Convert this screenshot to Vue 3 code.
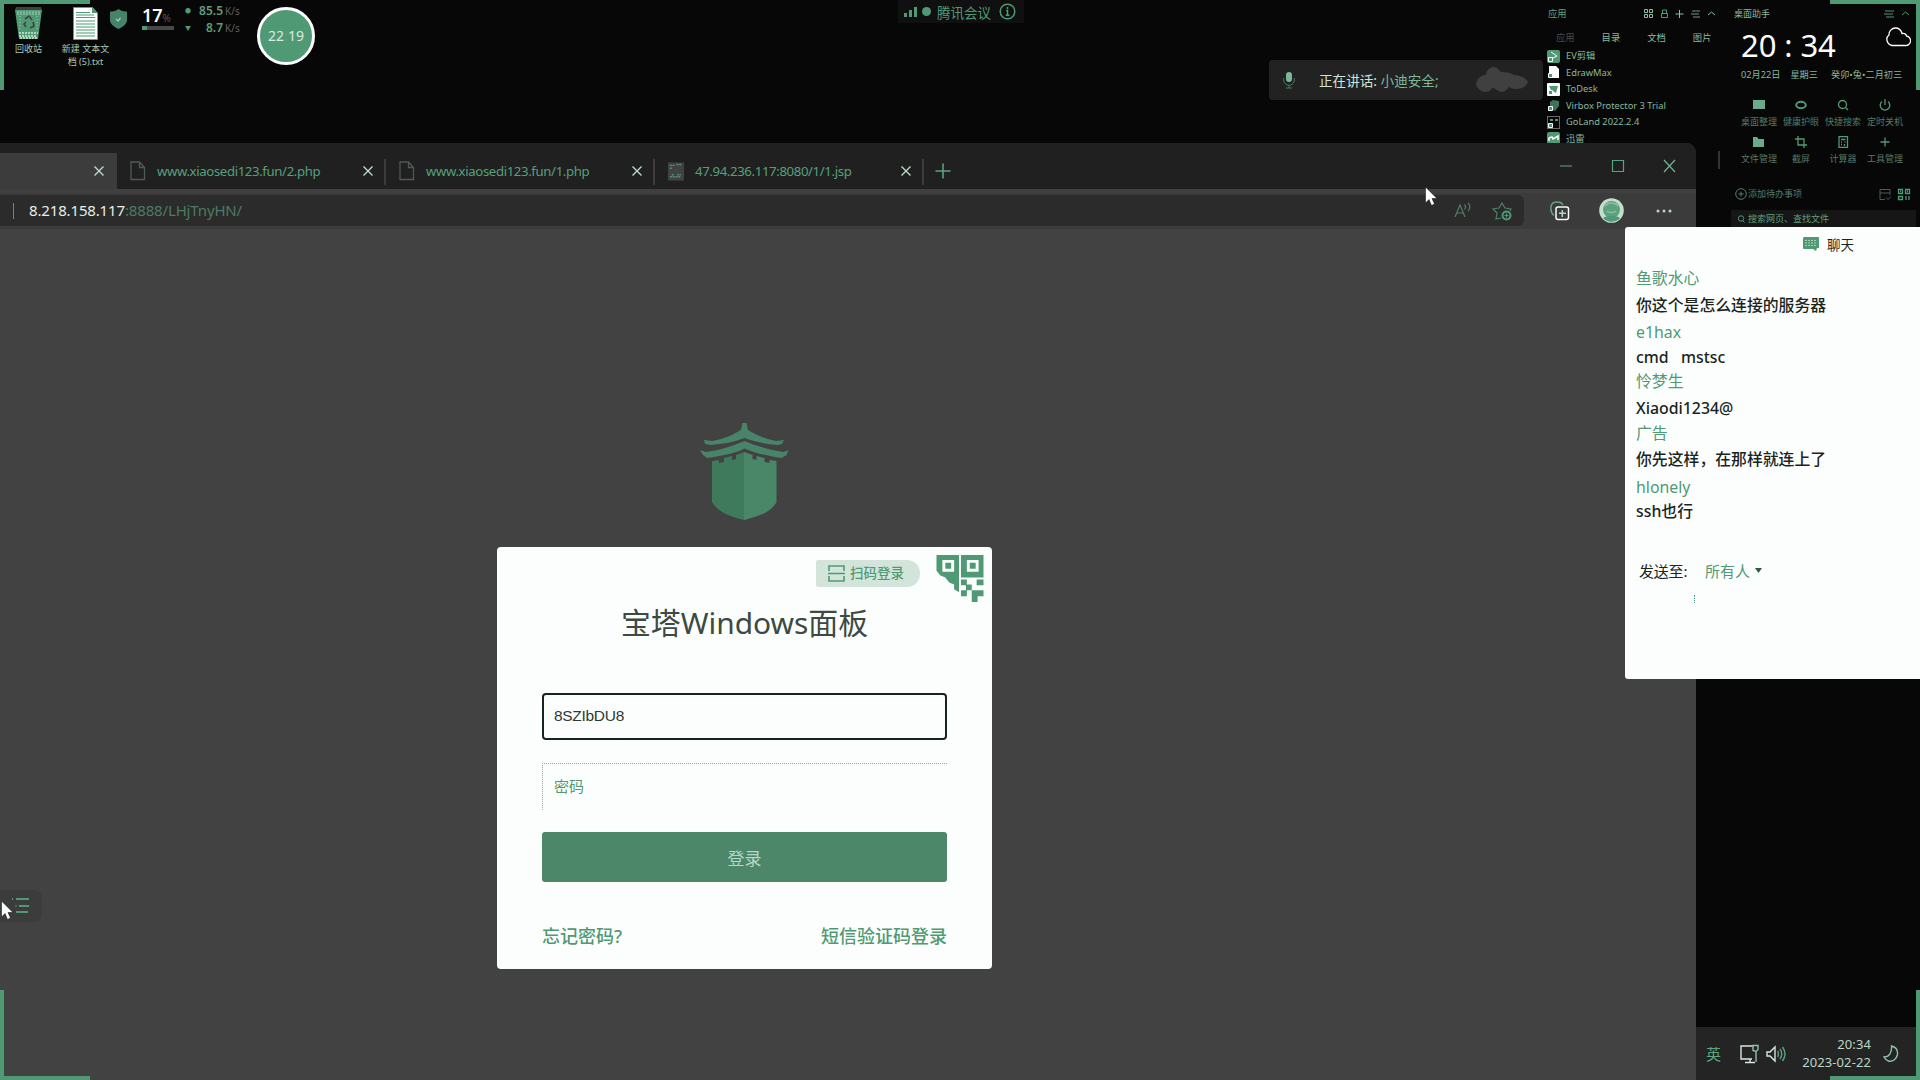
<script setup>
const tabs = [
  { title: 'www.xiaosedi123.fun/2.php', kind: 'file', width: 269 },
  { title: 'www.xiaosedi123.fun/1.php', kind: 'file', width: 269 },
  { title: '47.94.236.117:8080/1/1.jsp', kind: 'site', width: 269 },
]
const apps = [
  { name: 'EV剪辑', kind: 'play' },
  { name: 'EdrawMax', kind: 'doc' },
  { name: 'ToDesk', kind: 'send' },
  { name: 'Virbox Protector 3 Trial', kind: 'shield' },
  { name: 'GoLand 2022.2.4', kind: 'go' },
  { name: '迅雷', kind: 'bird' },
]
const tools = [
  { name: '桌面整理', icon: 'desk' },
  { name: '健康护眼', icon: 'eye' },
  { name: '快捷搜索', icon: 'search' },
  { name: '定时关机', icon: 'power' },
  { name: '文件管理', icon: 'folder' },
  { name: '截屏', icon: 'crop' },
  { name: '计算器', icon: 'calc' },
  { name: '工具管理', icon: 'plus' },
]
const messages = [
  { user: '鱼歌水心', text: '你这个是怎么连接的服务器', h: [27, 27] },
  { user: 'e1hax', text: 'cmd   mstsc', h: [28, 22] },
  { user: '怜梦生', text: 'Xiaodi1234@', h: [26, 28] },
  { user: '广告', text: '你先这样，在那样就连上了', h: [22, 30] },
  { user: 'hlonely', text: 'ssh也行', h: [26, 22] },
]
</script>

<template>
  <div class="desktop">
    <i class="corner tl"></i><i class="corner tr"></i>

    <div class="shortcuts">
      <div class="shortcut bin">
        <svg width="27" height="33" viewBox="0 0 27 33">
          <path d="M0 3h27l-4 29H4z" fill="#4f9a74" />
          <path d="M1 0h25l1 3H0z" fill="#424242" />
          <path d="M2 5h23M2 7h23" stroke="#a6ccb7" stroke-width="1" stroke-dasharray="2 1" />
          <path d="M4 26h19M4 29h18M5 31h17" stroke="#d5e6dc" stroke-width="1.4" stroke-dasharray="2 1" />
          <path d="M10 12l4-3 3 4M18 15l1 4-4 2M11 20l-2-3 2-2" stroke="#424242" stroke-width="1.6" fill="none" />
          <path d="M5 9v14M22 9v14" stroke="#a6ccb7" stroke-dasharray="1 2" />
        </svg>
        <span>回收站</span>
      </div>
      <div class="shortcut txt">
        <svg width="25" height="33" viewBox="0 0 25 33">
          <path d="M.5.5h19l5 6v26H.5z" fill="#fcfefd" stroke="#8a8a8a" />
          <path d="M19 0v6h6" fill="#4f9a74" />
          <path d="M3 5.500h14M3 8h18M3 10.500h19M3 14h19M3 17h19M3 20h19M3 23h19M3 26h19M3 29h19" stroke="#4f9a74" stroke-width="1.100" />
        </svg>
        <span>新建 文本文<br />档 (5).txt</span>
      </div>
    </div>

    <div class="monitor">
      <svg class="guard" width="17" height="20" viewBox="0 0 17 20">
        <path d="M8.500 0C11 2 14 2.500 17 2.500V11c0 4-4 7-8.500 9C4 18 0 15 0 11V2.500C3 2.500 6 2 8.500 0z" fill="#47826a" />
        <path d="M6 10l2 2L10.500 9" stroke="#a9cdb9" stroke-width="1.200" fill="none" />
      </svg>
      <div class="mem">
        <div><b>17</b><small>%</small></div>
        <div class="bar"><i></i></div>
      </div>
      <div class="net">
        <p><em>●</em><b>85.5</b><small>K/s</small></p>
        <p><em>▼</em><b>8.7</b><small>K/s</small></p>
      </div>
    </div>
    <div class="timer">22<u>:</u>19</div>

    <div class="meeting">
      <svg width="14" height="10" viewBox="0 0 14 10"><path d="M0 6h3v4H0zM5 3h3v7H5zM10 0h3v10h-3z" fill="#4f9a74" /></svg>
      <i></i>
      <span>腾讯会议</span>
      <svg width="17" height="17" viewBox="0 0 17 17" fill="none" stroke="#4f9a74"><circle cx="8.500" cy="8.500" r="7.300" stroke-width="1.500" /><path d="M8.500 4v2M7 7.500h1.500V12M6.800 12.300h3.600" stroke-width="1.500" /></svg>
    </div>

    <div class="speaking">
      <svg width="12" height="17" viewBox="0 0 12 17"><rect x="3" y="0" width="6" height="10" rx="3" fill="#7db698" /><path d="M.7 6v2a5.200 5.200 0 0 0 10.600 0V6M6 13v3M3 16h6" stroke="#427a5d" fill="none" /></svg>
      <span>正在讲话: <em>小迪安全;</em></span>
      <svg class="blob" width="52" height="26" viewBox="0 0 52 26"><path d="M0 17C2 10 6 8 10 8c0-4 3-7 7-8 4 0 6 3 8 5 6 0 10 1 13 3 6 0 12 3 14 7-2 5-7 7-12 7-3 0-5-1-7-2-2 3-5 5-8 5-3-1-5-4-9-4-2 3-4 4-7 4-5-1-9-4-9-9z" fill="#404040" /></svg>
    </div>

    <section class="apps">
      <header>
        <span>应用</span>
        <svg width="72" height="10" viewBox="0 0 72 10" fill="none" stroke="#8fbfa5">
          <path d="M.5.5h3v3h-3zM5.500.5h3v3h-3zM.5 5.500h3v3h-3zM5.500 5.500h3v3h-3z" />
          <path d="M17.500 4.500h6v4h-6zM18.500 4.500V1h4v3.500" stroke="#4f9a74" />
          <path d="M36 1v8M32 5h8" transform="translate(-.5 0)" />
          <path d="M48 2h8M47 5h8M49 8h7" stroke="#6a9c81" />
          <path d="M64 6l3.500-3L71 6" />
        </svg>
      </header>
      <nav><span class="dim">应用</span><span>目录</span><span>文档</span><span>图片</span></nav>
      <ul>
        <li v-for="a in apps" :key="a.name">
          <svg width="13" height="13" viewBox="0 0 13 13">
            <template v-if="a.kind === 'doc'"><path d="M2 0h7l3 3v9H2z" fill="#fcfefd" /></template>
            <template v-else-if="a.kind === 'send'"><rect width="13" height="13" rx="1" fill="#fcfefd" /><path d="M2 3h9l-2 7-3-2-2-1z" fill="#4f9a74" /></template>
            <template v-else-if="a.kind === 'shield'"><path d="M6 1l6 1v5l-4 5-5-3V3z" fill="#3f7358" /></template>
            <template v-else-if="a.kind === 'go'"><rect x=".5" y=".5" width="12" height="12" fill="#070707" stroke="#686868" /><path d="M3 4h3M8 4h3" stroke="#4f9a74" stroke-width="2" /></template>
            <template v-else><rect width="13" height="13" rx="2" fill="#4f9a74" /></template>
            <path v-if="a.kind === 'play'" d="M4 2l6 4-6 3" fill="none" stroke="#fcfefd" />
            <path v-if="a.kind === 'bird'" d="M2 9V6l3-1 1 2 5-3v4" fill="none" stroke="#fcfefd" stroke-width="1.500" />
            <path v-else d="M1.500 7.500h4v4h-4z" fill="#4f9a74" stroke="#fcfefd" />
          </svg>
          <span>{{ a.name }}</span>
        </li>
      </ul>
    </section>

    <section class="helper">
      <header>
        <span>桌面助手</span>
        <svg width="26" height="10" viewBox="0 0 26 10" fill="none" stroke="#4f9a74"><path d="M1 2h9M0 5h9M2 8h8M18 6l3.500-3L25 6" /></svg>
      </header>
      <div class="clock">
        <b>20 : 34</b>
        <svg width="25" height="20" viewBox="0 0 25 20"><path d="M6 18.500h13a4.800 4.800 0 0 0 1.500-9.500c-.3-2-2-3-4.500-2.500C15 3 12.500 1 9.500 1A6.500 6.500 0 0 0 3 8c-4 3-2 9.500 3 10.500z" fill="none" stroke="#fcfefd" stroke-width="1.300" /></svg>
      </div>
      <div class="date"><span>02月22日</span><span>星期三</span><span>癸卯•兔•二月初三</span></div>
      <div class="tools">
        <div v-for="t in tools" :key="t.name">
          <svg width="12" height="12" viewBox="0 0 12 12" fill="none" stroke="#4f9a74" stroke-width="1.300">
            <path v-if="t.icon === 'desk'" d="M0 1h12v9H0z" fill="#6bab89" stroke="none" />
            <template v-else-if="t.icon === 'eye'"><ellipse cx="6" cy="6" rx="4.800" ry="3.200" stroke-width="2" /></template>
            <template v-else-if="t.icon === 'search'"><circle cx="5.500" cy="5.500" r="4" /><path d="M8.500 8.500L11 11" /></template>
            <path v-else-if="t.icon === 'power'" d="M3 2.500a4.800 4.800 0 1 0 6 0M6 0v6" />
            <path v-else-if="t.icon === 'folder'" d="M0 1h4l1.500 2H11v8H0z" fill="#6bab89" stroke="none" />
            <path v-else-if="t.icon === 'crop'" d="M3 0v9h9M0 3h9v9" />
            <path v-else-if="t.icon === 'calc'" d="M2 .7h8.500v10.600H2zM4 3.500h4.500M4 6h1M7.500 6h1M4 8.500h1M7.500 8v2" />
            <path v-else d="M6 1.500v9M1.500 6h9" />
          </svg>
          <span>{{ t.name }}</span>
        </div>
      </div>
      <div class="todo">
        <svg width="12" height="12" viewBox="0 0 12 12" fill="none" stroke="#58806a"><circle cx="6" cy="6" r="5.300" /><path d="M6 3.500v5M3.500 6h5" /></svg>
        <span>添加待办事项</span>
        <svg width="32" height="13" viewBox="0 0 32 13" fill="none" stroke="#4a5f54"><path d="M6 11.500H1v-10h10V7M1 5h10M7 9.500l2 2 3-3" /><path d="M19.500 1.500h4v4h-4zM26.500 1.500h4v4h-4zM19.500 8.500h4v3h-4zM27 8v4M30 8v4M21 3.500h1M28 3.500h1" stroke="#4f9a74" stroke-width="1.300" /></svg>
      </div>
      <div class="find">
        <svg width="8" height="8" viewBox="0 0 8 8" fill="none" stroke="#4f9a74"><circle cx="4" cy="3.500" r="2.700" /><path d="M5.500 5.500l2 2" /></svg>
        <span>搜索网页、查找文件</span>
      </div>
    </section>
    <i class="rail"></i>

    <main class="browser">
      <div class="tabbar">
        <div class="tab active"><svg class="x" viewBox="0 0 10 10"><path d="M.5.5l9 9M9.500.5l-9 9" /></svg></div>
        <div v-for="t in tabs" :key="t.title" class="tab" :class="t.kind" :style="{ width: t.width + 'px' }">
          <svg v-if="t.kind === 'file'" width="16" height="20" viewBox="0 0 16 20" fill="none" stroke="#4e5a54" stroke-width="1.300"><path d="M1 1h8.500l5 5.500V18.500H1zM9.500 1v5.500h5" /></svg>
          <svg v-else width="16" height="19" viewBox="0 0 17 19"><path d="M0 0h17v19H0z" fill="#424242" /><path d="M2 3h5M9 2h6M2 6h3M2 15h12M4 13h2M10 13h4" stroke="#4f9a74" stroke-width="1.500" stroke-dasharray="2 1" /></svg>
          <span>{{ t.title }}</span>
          <svg class="x" viewBox="0 0 10 10"><path d="M.5.5l9 9M9.500.5l-9 9" /></svg>
        </div>
        <svg class="add" width="16" height="16" viewBox="0 0 16 16"><path d="M8 .5v15M.5 8h15" stroke="#5aa17d" stroke-width="1.600" /></svg>
        <svg class="controls" width="116" height="14" viewBox="0 0 116 14" fill="none" stroke="#5aa17d" stroke-width="1.200"><path d="M0 7h12" stroke="#6a9c81" /><path d="M52.500 1.500h11v11h-11z" /><path d="M104 1l11 12M115 1l-11 12" stroke="#74b391" /></svg>
      </div>
      <div class="toolbar">
        <div class="address">
          <i></i>
          <p><b>8.218.158.117</b>:8888/LHjTnyHN/</p>
          <svg width="60" height="20" viewBox="0 0 60 20" fill="none" stroke="#4f7f66" stroke-width="1.200">
            <path d="M1 16L6 4l5 12M3 12h6M10.500 3.500c1.500 1.500 1.500 3 0 5M14 2c2.500 2 2.500 5 0 8" />
            <path d="M47 17l-5 1 1-6-4-4 6-1 3-5 3 5 6 1-1 2" />
            <circle cx="52.500" cy="14.500" r="4" fill="#2d2d2d" stroke="#4f9a74" stroke-width="2" /><path d="M50.500 14.500h4M52.500 12.500v4" stroke="#4f9a74" />
          </svg>
        </div>
        <svg width="20" height="20" viewBox="0 0 20 20" fill="none" stroke="#b8d6c5" stroke-width="1.500"><path d="M4 14.500C1 12 .5 9 1 5.500 1.500 2 4 1 7 1c3 0 5 .5 6 3" stroke="#5fa480" /><rect x="6" y="6" width="12.500" height="12.500" rx="2" stroke="#fcfefd" /><path d="M12.300 9v7M9 12.300h7" /></svg>
        <svg class="avatar" width="25" height="25" viewBox="0 0 25 25"><circle cx="12.500" cy="12.500" r="12.300" fill="#c4ddcf" /><circle cx="12.500" cy="11.500" r="8.500" fill="#5ea17f" /><path d="M6 8c3-4 10-4 13 0M8 13c2 2 7 2 9 0" stroke="#8dbda3" stroke-width="1.500" fill="none" /><path d="M4 20c4-3 13-3 17 0-4 5-13 5-17 0z" fill="#4f9a74" /></svg>
        <svg width="16" height="4" viewBox="0 0 16 4" fill="#b8d6c5"><circle cx="2" cy="2" r="1.500" /><circle cx="8" cy="2" r="1.500" /><circle cx="14" cy="2" r="1.500" /></svg>
      </div>

      <div class="page">
        <svg class="logo" width="89" height="97" viewBox="0 0 89 97">
          <defs><linearGradient id="body"><stop offset=".5" stop-color="#3f7a5c" /><stop offset=".5" stop-color="#4a8769" /></linearGradient></defs>
          <path d="M42.500 0h4l1.500 7c8 5 18 9 28 11l8-1-2 4-4 1c-12-1-23-3-33.500-7C34 19 23 21 11 22l-6-1-1-4 8 1c11-2 21-6 29-11z" fill="#47846a" />
          <path d="M44.500 18c12 5 25 9 39 11l5-2-2 5-5 3c-14-2-27-5-37-9.500C34 31 20 33 7 35l-4-3-3-5 6 2c14-2 27-6 38.500-11z" fill="#47846a" />
          <path d="M44.500 29l8 3v4l4 1v-4l8 2v4l5 1v-3l7 1v41c-5 10-19 15-32 18C31 94 18 89 12 79V38l7-1v3l5-1v-4l8-2v4l4-1v-4z" fill="url(#body)" />
        </svg>
        <form class="card" @submit.prevent>
          <div class="scan">
            <div class="pill">
              <svg width="17" height="17" viewBox="0 0 17 17" fill="none" stroke="#4f9a74" stroke-width="1.600"><path d="M1 6V1h15v5M1 11v5h15v-5M0 8.500h17" /></svg>
              <span>扫码登录</span>
            </div>
            <svg width="48" height="47" viewBox="0 0 48 48" fill="#4f9a74">
              <path d="M0 0h23v38l-5-3v-5l-5-2-4-5-5-2-4-5zM6 5v12h12V5zM25 0h23v23H25zM31 5v12h12V5z" fill-rule="evenodd" />
              <path d="M9 8h6v6H9zM34 8h6v6h-6zM25 25h6v5h5v6h-5v6h-6v-6h5v-5h-5zM41 25h7v6h-7v-3zM36 36h12v6h-6v6h-6z" />
            </svg>
          </div>
          <h1>宝塔Windows面板</h1>
          <div class="field focus">8SZIbDU8</div>
          <div class="field empty">密码</div>
          <button>登录</button>
          <div class="links"><a>忘记密码?</a><a>短信验证码登录</a></div>
        </form>
      </div>
    </main>

    <aside class="chat">
      <header>
        <svg width="16" height="14" viewBox="0 0 16 14"><path d="M1 0h14a1 1 0 0 1 1 1v10h-2l-1 3-3-2H1a1 1 0 0 1-1-1V1z" fill="#4f9a74" /><path d="M2 3.500h12M2 6h12M2 8.500h12" stroke="#a9cdb9" stroke-dasharray="2 1" /></svg>
        <span>聊天</span>
      </header>
      <dl>
        <template v-for="m in messages" :key="m.user">
          <dt :style="{ height: m.h[0] + 'px' }">{{ m.user }}</dt>
          <dd :style="{ height: m.h[1] + 'px' }">{{ m.text }}</dd>
        </template>
      </dl>
      <div class="to"><span>发送至:</span><em>所有人</em><svg width="7" height="5" viewBox="0 0 7 5"><path d="M0 0h7L3.500 5z" fill="#2f5a44" /></svg></div>
      <i></i>
    </aside>

    <footer class="taskbar">
      <span class="ime">英</span>
      <svg width="46" height="20" viewBox="0 0 46 20" fill="none" stroke="#d5e7dc" stroke-width="1.400">
        <path d="M13 2H1v13h11M5 18.500h10M10 15v3" /><path d="M13 1.500h5v4l-2 2-3-1zM16 7v11" stroke="#8fbfa5" />
        <path d="M27 8h3l5-5v14l-5-5h-3z" /><path d="M37.500 7q2 3 0 6M40 5q3.500 5 0 10M42.500 3q5 7 0 14" stroke="#5aa17d" />
      </svg>
      <p>20:34<br />2023-02-22</p>
      <svg width="16" height="18" viewBox="0 0 16 18"><path d="M8.500 1c4 1 6.500 4 6 8.500-1 5-5 7.500-9 6.500-2-.5-3.500-2-4.500-4 5 0 8-4 7.500-11z" fill="none" stroke="#8fbfa5" stroke-width="1.400" /></svg>
    </footer>

    <div class="sideicon"><svg width="18" height="17" viewBox="0 0 18 17" stroke="#4f9a74" stroke-width="2"><path d="M0 2h1M4 2h13M3.500 9h1M7 9h10M4 15h12" /></svg></div>
    <svg class="pointer p1" width="13" height="19" viewBox="0 0 13 19"><path d="M.5 0v16l3.500-3.500L6.500 18.500l3-1.500-2.500-5.500h5z" fill="#fcfefd" stroke="#070707" stroke-width=".5" /></svg>
    <svg class="pointer p2" width="13" height="19" viewBox="0 0 13 19"><path d="M.5 0v16l3.500-3.500L6.500 18.500l3-1.500-2.500-5.500h5z" fill="#fcfefd" stroke="#070707" stroke-width=".5" /></svg>
    <i class="corner bl"></i><i class="corner br"></i>
  </div>
</template>

<style>
body { margin: 0; background: #070707; }
</style>

<style scoped>
* { box-sizing: border-box; }
svg { display: block; flex: none; }
p, h1, dl, dd, ul { margin: 0; padding: 0; }
i, em, b { font-style: normal; font-weight: 400; }
.desktop {
  position: relative; width: 1920px; height: 1080px; overflow: hidden;
  background: #070707; color: #4f9a74;
  font-family: "Noto Sans", "Noto Sans CJK SC", sans-serif;
}
.corner { position: absolute; width: 90px; height: 90px; border: 0 solid #4f9a74; z-index: 9; pointer-events: none; }
.tl { left: 0; top: 0; border-width: 4px 0 0 4px; }
.tr { right: 0; top: 0; border-width: 4px 4px 0 0; }
.bl { left: 0; bottom: 0; border-width: 0 0 4px 4px; }
.br { right: 0; bottom: 0; border-width: 0 4px 4px 0; }

.shortcuts { position: absolute; left: 0; top: 7px; display: flex; }
.shortcut { display: flex; flex-direction: column; align-items: center; gap: 3px; font-size: 9px; line-height: 12.500px; text-align: center; color: #a9c9b7; white-space: nowrap; }
.bin { width: 57px; }
.txt { width: 57px; }

.monitor { position: absolute; left: 110px; top: 4px; display: flex; height: 32px; }
.guard { margin-top: 5px; }
.mem { width: 32px; margin-left: 15px; }
.mem div:first-child { height: 22px; display: flex; align-items: baseline; line-height: 22px; }
.mem b { font-size: 18px; font-weight: 600; color: #fcfefd; }
.mem small { font-size: 10px; color: #585858; }
.mem .bar { height: 4px; background: #484848; }
.bar i { display: block; width: 5px; height: 4px; background: #4f9a74; }
.net { width: 57px; margin-left: 11px; margin-top: -1px; }
.net p { display: flex; align-items: center; justify-content: flex-end; height: 16.500px; line-height: 16px; font-size: 12px; }
.net b { font-weight: 600; color: #5f9f7e; }
.net em { font-size: 6px; margin-right: auto; }
.net small { width: 19px; padding-left: 2px; font-size: 10px; color: #606060; }
.timer { position: absolute; left: 257px; top: 7px; width: 58px; height: 58px; border: 3px solid #fcfefd; border-radius: 50%; background: #4f9a74; color: #d9eae0; font-size: 14px; line-height: 52px; text-align: center; }
.timer u { text-decoration: none; color: #5ba17d; }

.meeting { position: absolute; left: 898px; top: 0; width: 126px; height: 23px; padding-left: 6px; display: flex; align-items: center; background: #101010; font-size: 13.500px; }
.meeting i { width: 9px; height: 9px; margin: 0 6px 0 4px; border-radius: 50%; background: #4f9a74; }
.meeting svg:last-child { margin-left: 8px; }

.speaking { position: absolute; left: 1269px; top: 60px; width: 274px; height: 40px; padding-left: 14px; display: flex; align-items: center; border-radius: 4px; background: #222; font-size: 13.600px; color: #cfe2d7; white-space: nowrap; }
.speaking span { width: 157px; margin-left: 24px; }
.speaking em { color: #7db698; }

.apps { position: absolute; left: 1547px; top: 0; width: 172px; height: 146px; overflow: hidden; font-size: 9.300px; line-height: 16px; color: #8ab89e; }
.apps header { display: flex; justify-content: space-between; align-items: center; height: 27px; padding: 0 3px 0 1px; color: #5f9f7e; }
.apps nav { display: flex; gap: 27px; height: 21px; padding-left: 9px; align-items: center; }
.dim { color: #4a4a4a; }
.apps ul { list-style: none; }
.apps li { display: flex; align-items: center; gap: 6px; height: 16.500px; white-space: nowrap; }

.helper { position: absolute; left: 1731px; top: 0; width: 185px; font-size: 9px; line-height: 12px; color: #5f9f7e; }
.helper header { display: flex; justify-content: space-between; align-items: center; height: 27px; padding: 0 6px 0 3px; color: #8ab89e; }
.clock { display: flex; justify-content: space-between; height: 39px; padding: 0 5px 0 10px; color: #fcfefd; }
.clock b { font-size: 31px; line-height: 37px; letter-spacing: -.1px; white-space: nowrap; }
.date { display: flex; height: 18px; align-items: center; padding-left: 10px; font-size: 9.200px; color: #86b79c; white-space: nowrap; }
.date span:nth-child(2) { margin: 0 13px 0 10px; }
.tools { display: grid; grid-template-columns: repeat(4, 42px); grid-auto-rows: 37px; padding: 15px 0 0 7px; color: #557a66; }
.tools div { display: flex; flex-direction: column; align-items: center; gap: 5px; white-space: nowrap; }
.todo { display: flex; align-items: center; height: 36px; padding: 0 5px 0 4px; margin-top: 3px; color: #557a66; }
.todo span { flex: 1; padding-left: 1px; }
.find { display: flex; align-items: center; gap: 3px; height: 18px; margin-top: -2px; padding-left: 6px; background: #161616; }
.rail { position: absolute; left: 1718px; top: 151px; width: 2px; height: 18px; background: #333; }

.browser { position: absolute; left: 0; top: 143px; width: 1696px; height: 937px; display: flex; flex-direction: column; border-radius: 0 10px 0 0; overflow: hidden; background: #424242; }
.tabbar { display: flex; height: 46px; background: #202020; }
.tab { display: flex; align-items: center; height: 36px; margin-top: 10px; padding: 0 11px 0 13px; font-size: 13.200px; letter-spacing: -.37px; color: #55a07b; border: 0 solid; border-right-width: 2px; border-image: linear-gradient(transparent 7px, #3c3c3c 7px 31px, transparent 31px) 1; white-space: nowrap; }
.tab span { flex: 1; padding-left: 11px; }
.active { width: 117px; padding-right: 12px; background: #3c3c3c; border: 0; }
.x { width: 10px; height: 10px; fill: none; stroke: #b8dcc8; stroke-width: 1.400; }
.active .x { margin-left: auto; margin-right: 1px; }
.add { margin: 20px 0 0 11px; }
.controls { margin: 16px 20px 0 auto; }
.toolbar { display: flex; align-items: center; height: 40px; padding-bottom: 1px; background: #3b3b3b; border-top: 4px solid #404040; }
.address { display: flex; align-items: center; width: 1524px; height: 31px; padding: 0 10px 0 13px; border-radius: 0 6px 6px 0; background: #2b2b2b; }
.address i { width: 1px; height: 16px; background: #4f9a74; }
.address p { flex: 1; padding-left: 15px; font-size: 15px; line-height: 20px; margin-top: -2px; letter-spacing: -.15px; color: #4b7c63; }
.address b { color: #e3f0e8; }
.toolbar > svg { margin-left: 26px; }
.toolbar > svg.avatar { margin-left: 29px; }
.toolbar > svg:last-child { margin-left: 32px; }

.page { flex: 1; display: flex; flex-direction: column; align-items: center; padding: 194px 207px 0 0; }
.logo { margin-bottom: 27px; }
.card { width: 495px; height: 422px; padding: 8px 45px 0; border-radius: 4px; background: #fcfefd; }
.scan { display: flex; justify-content: flex-end; align-items: flex-start; gap: 16px; height: 48px; margin-right: -37px; }
.pill { display: flex; align-items: center; gap: 5px; width: 104px; height: 27px; margin-top: 5px; padding-left: 12px; border-radius: 2px 13px 13px 2px; background: #d3e5db; font-size: 13.500px; line-height: 20px; font-weight: 500; white-space: nowrap; }
.pill span { margin-top: -2px; }
h1 { height: 42px; font-size: 29.900px; line-height: 40px; font-weight: 400; color: #3c4a43; text-align: center; white-space: nowrap; }
.field { width: 405px; height: 47px; padding-left: 12px; display: flex; align-items: center; }
.focus { margin-top: 48px; border: 2px solid #16241c; border-radius: 4px; padding: 0 0 1px 10px; font-family: "Liberation Sans", sans-serif; font-size: 15.500px; letter-spacing: -.3px; color: #2c3a33; }
.empty { margin-top: 23px; border-top: 1px dotted #7db698; border-left: 1px dotted #7db698; font-size: 15px; padding: 0 0 4px 11px; }
button { display: block; width: 405px; height: 50px; margin: 22px 0 0; padding: 0; border: 0; border-radius: 3px; background: #4c8769; color: #b7d6c5; font: 17px "Noto Sans CJK SC", sans-serif; }
.links { display: flex; justify-content: space-between; margin-top: 41px; font-size: 18px; line-height: 26px; font-weight: 500; }

.chat { position: absolute; left: 1625px; top: 227px; width: 295px; height: 452px; border-radius: 3px 0 0 3px; background: #fcfefd; color: #18251e; z-index: 2; }
.chat header { display: flex; align-items: center; gap: 8px; height: 34px; padding-left: 178px; font-size: 13.500px; }
.chat dl { margin-top: 3px; padding-left: 11px; font-size: 15.850px; line-height: 22px; white-space: pre; }
.chat dt, .chat dd { display: flex; align-items: center; }
.chat dt { color: #4f9a74; }
.chat dd { font-weight: 500; }
.to { display: flex; align-items: center; height: 24px; margin: 36px 0 0 14px; font-size: 15px; }
.to span { width: 66px; letter-spacing: -.2px; }
.to em { margin-right: 5px; color: #4f9a74; }
.chat > i { display: block; width: 1px; height: 8px; margin: 13px 0 0 69px; border-left: 1px dotted #4f9a74; }

.taskbar { position: absolute; left: 1696px; top: 1027px; width: 224px; height: 53px; display: flex; align-items: center; padding-left: 10px; background: #242424; color: #b9d6c6; }
.ime { width: 34px; font-size: 15px; color: #5fa480; }
.taskbar p { width: 85px; margin-top: -2px; text-align: right; font-size: 13px; line-height: 18px; letter-spacing: .1px; }
.taskbar svg:last-child { margin-left: 12px; }

.sideicon { position: absolute; left: 0; top: 890px; width: 42px; height: 32px; padding: 7px 0 0 12px; border-radius: 0 8px 8px 0; background: #3c3c3c; }
.pointer { position: absolute; z-index: 3; }
.p1 { left: 1425px; top: 187px; }
.p2 { left: 1px; top: 901px; }
</style>
